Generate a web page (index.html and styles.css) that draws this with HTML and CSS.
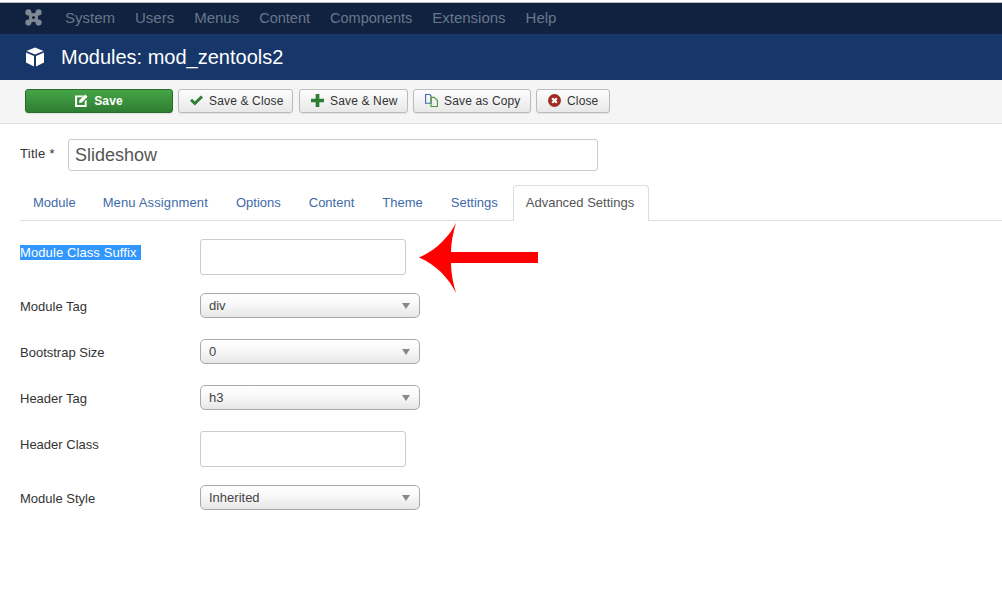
FILE: index.html
```html
<!DOCTYPE html>
<html lang="en">
<head>
<meta charset="utf-8">
<title>Modules: mod_zentools2</title>
<link rel="stylesheet" href="styles.css">
</head>
<body>
<nav class="navbar">
  <svg class="logo" viewBox="0 0 20 20" width="17" height="17"><path fill="#7f8894" d="M3 3Q10 7 17 3 13 10 17 17 10 13 3 17 7 10 3 3Z"/><g fill="#7f8894"><circle cx="4" cy="4" r="3.600"/><circle cx="16" cy="4" r="3.600"/><circle cx="4" cy="16" r="3.600"/><circle cx="16" cy="16" r="3.600"/></g><circle cx="10" cy="10" r="1.800" fill="#10223f"/></svg>
  <ul class="menu">
    <li>System</li><li>Users</li><li>Menus</li><li class="tight">Content</li><li class="tight">Components</li><li>Extensions</li><li>Help</li>
  </ul>
</nav>
<header class="titlebar">
  <svg class="cube" viewBox="0 0 20 20" width="20" height="20"><path fill="#fff" d="M10 .5 18.500 4 10 7.500 1.500 4Z"/><path fill="#fff" d="M1 5.500 9 9v10.500L1 15.500Z"/><path fill="#fff" d="M19 5.500 11 9v10.500l8-4Z"/></svg>
  <h1>Modules: mod_zentools2</h1>
</header>
<div class="toolbar">
  <button class="btn btn-save"><svg class="ico" viewBox="0 0 14 14"><path fill="#fff" d="M0 1.500H9.500L7.500 3.500H2.200v8.300h8.300V8l2-2v7.900H0Z"/><path fill="#fff" d="M4.500 7 11 .5 13.500 3 7 9.500H4.500Z"/></svg>Save</button>
  <button class="btn btn-saveclose"><svg class="ico" viewBox="0 0 14 14"><path fill="#2f7d32" d="M0 7.300 2.200 5 5.200 8 11.800 1.500 14 3.800 5.200 12.500Z"/></svg>Save &amp; Close</button>
  <button class="btn btn-savenew"><svg class="ico" viewBox="0 0 14 14"><path fill="#2f7d32" d="M5 0h4v5h5v4H9v5H5V9H0V5h5Z"/></svg>Save &amp; New</button>
  <button class="btn btn-copy"><svg class="ico" viewBox="0 0 14 14" fill="none" stroke-width="1.200"><path stroke="#3f6ba8" d="M.6.6H5.400L6.500 2V10H.6Z"/><path stroke="#4e9a3a" d="M6.500 3.600H10L13.400 7V13.400H6.500Z"/></svg>Save as Copy</button>
  <button class="btn btn-close"><svg class="ico" viewBox="0 0 14 14"><circle cx="7" cy="7" r="7" fill="#a02c25"/><path stroke="#fff" stroke-width="2.400" d="M4.500 4.500l5 5M9.500 4.500l-5 5"/></svg>Close</button>
</div>
<main class="content">
  <div class="title-row">
    <label class="title-label">Title *</label>
    <input class="title-input" type="text" value="Slideshow">
  </div>
  <ul class="tabs">
    <li class="first">Module</li><li class="wide">Menu Assignment</li><li>Options</li><li>Content</li><li>Theme</li><li>Settings</li><li class="active">Advanced Settings</li>
  </ul>
  <div class="form">
    <div class="row row-text"><label><span class="selected">Module Class Suffix&nbsp;</span></label><input class="field" type="text"></div>
    <div class="row"><label>Module Tag</label><div class="select">div</div></div>
    <div class="row"><label>Bootstrap Size</label><div class="select">0</div></div>
    <div class="row"><label>Header Tag</label><div class="select">h3</div></div>
    <div class="row row-text"><label>Header Class</label><input class="field" type="text"></div>
    <div class="row"><label>Module Style</label><div class="select">Inherited</div></div>
  </div>
</main>
<svg class="arrow" viewBox="0 0 120 70" width="120" height="70"><path fill="#fe0000" d="M0 34.500C16 28 30 14 37 0 34 10 32 20 32 29H119V40H32C32 50 34 60 37 70 30 55 16 41 0 34.500Z"/></svg>
</body>
</html>
```
FILE: styles.css
```css
* { box-sizing: border-box; }
html, body { margin: 0; padding: 0; }
body {
  position: relative;
  width: 1002px;
  height: 607px;
  overflow: hidden;
  background: #fff;
  font-family: "Liberation Sans", Arial, sans-serif;
  font-size: 13px;
  color: #333;
  padding-top: 2px;
}
.navbar {
  height: 32px;
  background: #10223f;
  border-top: 1px solid #b5b5b5;
  display: flex;
  align-items: center;
  padding: 0 0 2px 25px;
}
.logo { display: block; }
.menu {
  list-style: none;
  margin: 0 0 0 23px;
  padding: 0;
  display: flex;
  align-items: baseline;
  gap: 20px;
  font-size: 15px;
  color: #68778b;
}
.menu .tight { font-size: 14.500px; }
.titlebar {
  height: 46px;
  background: #17366a;
  display: flex;
  align-items: center;
  padding-left: 25px;
  gap: 16px;
  color: #fff;
}
.titlebar h1 {
  margin: 0;
  font-weight: 400;
  font-size: 20px;
  line-height: 46px;
}
.toolbar {
  height: 44px;
  background: #f5f5f5;
  border-bottom: 1px solid #e0e0e0;
  display: flex;
  align-items: center;
  padding: 0 0 2px 25px;
  gap: 5px;
}
.btn {
  height: 24px;
  display: flex;
  align-items: center;
  gap: 6px;
  padding: 0 0 0 11px;
  font: 12px "Liberation Sans", Arial, sans-serif;
  letter-spacing: 0.150px;
  color: #333;
  background: linear-gradient(#fdfdfd, #e8e8e8);
  border: 1px solid #bbb;
  border-radius: 3px;
  box-shadow: 0 1px 1px rgba(0,0,0,.08);
}
.btn-save {
  width: 148px;
  justify-content: center;
  padding: 0;
  color: #fff;
  font-weight: 700;
  background: linear-gradient(#46a546, #2f7d32);
  border-color: #2a6b2d;
}
.btn-saveclose { width: 115px; margin-right: 1px; }
.btn-savenew { width: 109px; }
.btn-copy { width: 118px; }
.btn-close { width: 74px; }
.ico { width: 13px; height: 13px; display: block; flex: none; }
.content { padding: 15px 0 0 20px; }
.title-row { display: flex; align-items: center; }
.title-label { width: 48px; font-size: 13px; letter-spacing: 0.300px; padding-bottom: 4px; }
.title-input {
  width: 530px;
  height: 32px;
  padding: 0 6px;
  font: 18px "Liberation Sans", Arial, sans-serif;
  color: #555;
  border: 1px solid #ccc;
  border-radius: 3px;
  outline: none;
}
.tabs {
  list-style: none;
  margin: 14px 0 0;
  padding: 0;
  height: 36px;
  display: flex;
  border-bottom: 1px solid #ddd;
  font-size: 13px;
  color: #3f6ba8;
}
.tabs li {
  height: 36px;
  line-height: 34px;
  padding: 0 12px;
  margin-right: 2px;
  border: 1px solid transparent;
  border-bottom: 0;
}
.tabs .first { margin-right: 1px; }
.tabs .wide { letter-spacing: 0.130px; }
.tabs .active {
  color: #555;
  padding-right: 14px;
  background: #fff;
  border-color: #ddd;
  border-radius: 4px 4px 0 0;
}
.form { padding-top: 18px; }
.row {
  display: flex;
  align-items: flex-start;
  margin-bottom: 21px;
}
.row label { width: 180px; line-height: 18px; padding-top: 5px; flex: none; }
.row-text { margin-bottom: 18px; }
.selected { background: #3297fd; color: #fff; letter-spacing: 0.100px; padding-right: 1px; }
.field {
  width: 206px;
  height: 36px;
  border: 1px solid #ccc;
  border-radius: 3px;
  outline: none;
}
.select {
  position: relative;
  width: 220px;
  height: 25px;
  line-height: 23px;
  padding-left: 8px;
  font-size: 13px;
  color: #444;
  background: linear-gradient(#fff, #f8f8f8 45%, #e6e6e6);
  border: 1px solid #aaa;
  border-radius: 5px;
}
.select::after {
  content: "";
  position: absolute;
  right: 9px;
  top: 9px;
  border-left: 4px solid transparent;
  border-right: 4px solid transparent;
  border-top: 6px solid #888;
}
.arrow {
  position: absolute;
  left: 419px;
  top: 223px;
}
```
